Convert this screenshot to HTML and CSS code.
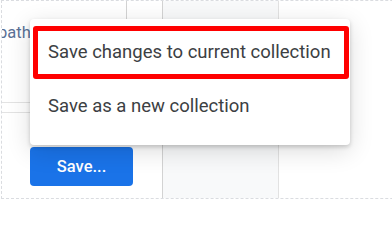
FILE: index.html
```html
<!DOCTYPE html>
<html>
<head>
<meta charset="utf-8">
<link rel="stylesheet" href="styles.css">
</head>
<body>
<div class="frame">
  <div class="label">path</div>
  <div class="rows"></div>
  <button class="save-btn">Save...</button>
  <div class="menu">
    <div class="item item-highlight">Save changes to current collection</div>
    <div class="item">Save as a new collection</div>
  </div>
</div>
</body>
</html>
```

FILE: styles.css
```css
html, body {
  margin: 0;
  padding: 0;
  width: 392px;
  height: 200px;
  overflow: hidden;
  background: #fff;
  font-family: Roboto, "Liberation Sans", sans-serif;
}

.frame {
  position: relative;
  margin-left: 1px;
  width: 520px;
  height: 197px;
  border: 1px dashed #dadce0;
  overflow: hidden;
  background-color: #fff;
  background-image:
    linear-gradient(#d3d3d3, #d3d3d3),
    linear-gradient(#d3d3d3, #d3d3d3),
    linear-gradient(#e2e2e2, #e2e2e2),
    linear-gradient(#f8f9fa, #f8f9fa);
  background-size: 1px 22px, 1px 100%, 1px 100%, 115px 100%;
  background-position: 124px 0, 160px 0, 276px 0, 161px 0;
  background-repeat: no-repeat;
}

.label {
  margin-top: 22px;
  margin-left: -4px;
  height: 19px;
  line-height: 19px;
  font-size: 16.5px;
  color: #5a7196;
}

.rows {
  margin-top: 60px;
  margin-left: -2px;
  width: 30px;
  height: 9px;
  border-top: 1px solid #e3e3e3;
  border-bottom: 1px solid #e3e3e3;
}

.save-btn {
  display: block;
  margin-top: 34px;
  margin-left: 28px;
  width: 103px;
  height: 39px;
  border: none;
  border-radius: 4px;
  background: #1a73e8;
  color: #fff;
  font-family: Roboto, "Liberation Sans", sans-serif;
  font-size: 16.5px;
  font-weight: 500;
  padding: 0;
}

.menu {
  position: absolute;
  left: 28px;
  top: 18px;
  width: 320px;
  padding: 7px 0 12px;
  background: #fff;
  border-radius: 4px;
  box-shadow: 0 2px 4px rgba(0, 0, 0, 0.18), 0 6px 24px rgba(0, 0, 0, 0.14);
}

.item {
  height: 54px;
  line-height: 54px;
  padding-left: 18px;
  font-size: 18.5px;
  color: #3c4043;
  white-space: nowrap;
}

.item-highlight {
  height: 43px;
  line-height: 43px;
  margin: 0 1px 0 3px;
  padding-left: 10px;
  border: 5px solid #ff0000;
  border-radius: 3px;
}
```
